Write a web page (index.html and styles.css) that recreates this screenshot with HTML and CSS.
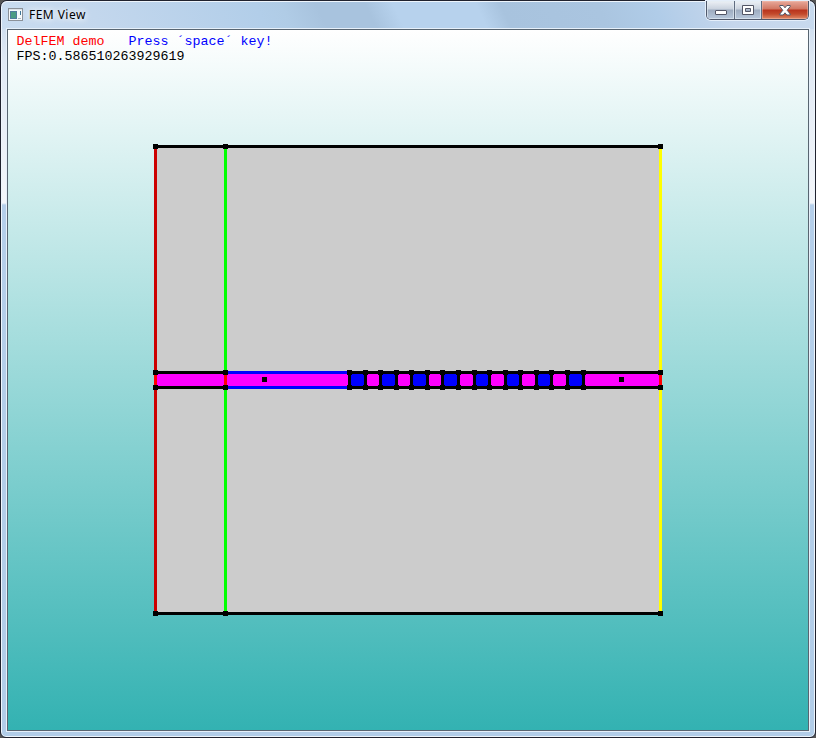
FILE: index.html
```
<!DOCTYPE html>
<html lang="en">
<head>
<meta charset="utf-8">
<title>FEM View</title>
<link rel="stylesheet" href="styles.css">
</head>
<body>
<div class="window">
  <header class="titlebar">
    <svg class="app-icon" width="15" height="13" viewBox="0 0 15 13" shape-rendering="crispEdges">
      <path fill="#8b9199" d="M0 0h15v13H0z"/><path fill="#f7f9fb" d="M1 1h13v11H1z"/>
      <path fill="#dce2e8" d="M1 1h13v1H1z"/>
      <path fill="#527b9d" d="M2 3h7v8H2z"/><path fill="#4c9b83" d="M3 4h5v6H3z"/>
      <path fill="#3e7597" d="M12 3h1v4h-1z"/><path fill="#aeb7c0" d="M10 10h3v1h-3z"/>
    </svg>
    <h1 class="title">FEM View</h1>
    <div class="controls">
      <button class="control minimize" aria-label="Minimize">
        <svg width="12" height="5" viewBox="0 0 12 5"><rect x=".5" y=".5" width="11" height="4" rx=".5" fill="#fff" stroke="#535666"/></svg>
      </button>
      <button class="control maximize" aria-label="Maximize">
        <svg width="12" height="10" viewBox="0 0 12 10"><path fill="#fff" fill-rule="evenodd" stroke="#535666" d="M.5.5h11v9H.5zM3.500 3.500h5v3h-5z"/></svg>
      </button>
      <button class="control close" aria-label="Close">
        <svg width="12" height="11" viewBox="0 0 12 11"><path fill="#fff" stroke="#535666" d="M.8.5h3.4L6 2.8 7.8.5h3.4v1L8.200 5.300l3 3.700v1H7.800L6 7.800 4.200 10H.8V9l3-3.700-3-3.800z"/></svg>
      </button>
    </div>
  </header>
  <main class="viewport">
    <svg class="mesh" width="510" height="474" viewBox="153 143 510 474" shape-rendering="crispEdges">
      <path fill="#ccc" d="M155 146h506v468H155z"/>
      <path fill="#f0f" d="M155 372h506v16H155z"/>
      <path fill="#00f" d="M350 373h16v14h-16zM381 373h16v14h-16zM412 373h16v14h-16zM443 373h16v14h-16zM475 373h16v14h-16zM506 373h16v14h-16zM537 373h16v14h-16zM568 373h16v14h-16z"/>
      <g fill="none" stroke-width="3">
        <path stroke="#c00" d="M155.500 146v226M155.500 388v226"/>
        <path stroke="#0f0" d="M225.500 146v226M225.500 388v226"/>
        <path stroke="#ff0" d="M660.500 146v226M660.500 388v226"/>
        <path stroke="#f00" d="M155.500 372v16M225.500 372v16M660.500 372v16"/>
        <path stroke="#00f" d="M225 372.500h125M225 387.500h125"/>
        <path stroke="#000" d="M155 146.500h506M155 613.500h506M155 372.500h70M155 387.500h70M349 372.500h312M349 387.500h312"/>
        <path stroke="#000" d="M349.500 372v16M365.500 372v16M380.500 372v16M396.500 372v16M411.500 372v16M427.500 372v16M442.500 372v16M458.500 372v16M474.500 372v16M489.500 372v16M505.500 372v16M520.500 372v16M536.500 372v16M551.500 372v16M567.500 372v16M583.500 372v16"/>
      </g>
      <g stroke="#000" stroke-width="5">
        <path d="M153 146.500h5M223 146.500h5M658 146.500h5M153 613.500h5M223 613.500h5M658 613.500h5M262 379.500h5M619 379.500h5"/>
        <path d="M153 372.500h5M223 372.500h5M347 372.500h5M363 372.500h5M378 372.500h5M394 372.500h5M409 372.500h5M425 372.500h5M440 372.500h5M456 372.500h5M472 372.500h5M487 372.500h5M503 372.500h5M518 372.500h5M534 372.500h5M549 372.500h5M565 372.500h5M581 372.500h5M658 372.500h5"/>
        <path d="M153 387.500h5M223 387.500h5M347 387.500h5M363 387.500h5M378 387.500h5M394 387.500h5M409 387.500h5M425 387.500h5M440 387.500h5M456 387.500h5M472 387.500h5M487 387.500h5M503 387.500h5M518 387.500h5M534 387.500h5M549 387.500h5M565 387.500h5M581 387.500h5M658 387.500h5"/>
      </g>
    </svg>
    <div class="overlay">
      <p class="line"><span class="demo">DelFEM demo</span>   <span class="hint">Press ´space´ key!</span></p>
      <p class="line">FPS:0.586510263929619</p>
    </div>
  </main>
</div>
</body>
</html>
```
FILE: styles.css
```
* { box-sizing: border-box; }
body { margin: 0; background: #555; overflow: hidden; }

.window {
  width: 816px;
  height: 738px;
  display: flex;
  flex-direction: column;
  border: 1px solid #20222e;
  border-radius: 7px 7px 6px 6px;
  box-shadow: inset 0 0 0 1px #eef5fc;
  padding: 0 6px 6px;
  background: linear-gradient(#c4d7ec 0, #e0e9f4 60px, #f3f6fa 202px, #b5cfea 204px, #b2cde8 100%);
}

.titlebar {
  height: 28px;
  flex: none;
  display: flex;
  align-items: flex-start;
  margin: 0 -5px;
  padding: 0 5px 0 6px;
  border-top: 1px solid #eef5fc;
  border-radius: 6px 6px 0 0;
  background:
    linear-gradient(65deg, #c9dcf0 0, #c3d7ed 90px, #b2cee9 240px, #b0cce6 263px, #a8c3de 295px, #a8c3de 340px, #b7d2ed 365px, #b7d2ed 440px, #a8c3de 462px, #aac5e0 550px, #b0cce8 600px, #c5d6ec 665px, #c8daee 100%);
}

.app-icon { margin-top: 6px; }

.title {
  margin: 4px 0 0 6px;
  font: 400 12px/18px "Noto Sans", sans-serif;
  letter-spacing: .45px;
  color: #000;
  text-shadow: 0 0 6px #fff, 0 0 8px #fff;
}

.controls {
  display: flex;
  height: 19px;
  margin-left: auto;
  margin-top: -1px;
  border: 1px solid #4f586b;
  border-top: 0;
  border-radius: 0 0 5px 5px;
  overflow: hidden;
  box-shadow: 0 0 0 1px #e4eefa;
}

.control {
  display: flex;
  align-items: center;
  justify-content: center;
  width: 28px;
  height: 18px;
  padding: 0;
  border: 0;
  border-right: 1px solid #606c80;
  background: linear-gradient(#edf1f6 0, #c9d2de 8px, #9eacc0 9px, #b8c8dc 100%);
  box-shadow: inset 0 0 0 1px #e3ebf3aa;
}
.minimize { padding-top: 5px; }
.maximize { width: 27px; }
.close {
  width: 46px;
  border: 0;
  background: linear-gradient(#e8a99b 0, #d17662 8px, #b8331d 9px, #c34a2c 13px, #df8a68 100%);
  box-shadow: inset 0 0 0 1px #f4c4b577;
}

.viewport {
  position: relative;
  flex: 1;
  border: 1px solid #586571;
  box-shadow: 0 0 0 1px #e6f0fa;
  background: linear-gradient(#fff, #33b2b2);
  padding: 113px 0 0 145px;
}
.mesh { display: block; }

.overlay { position: absolute; left: 8.500px; top: 4px; }
.line {
  margin: 0;
  font: 13.33px/15px "Liberation Mono", monospace;
  white-space: pre;
  color: #000;
}
.demo { color: #f00; }
.hint { color: #00f; }
```
